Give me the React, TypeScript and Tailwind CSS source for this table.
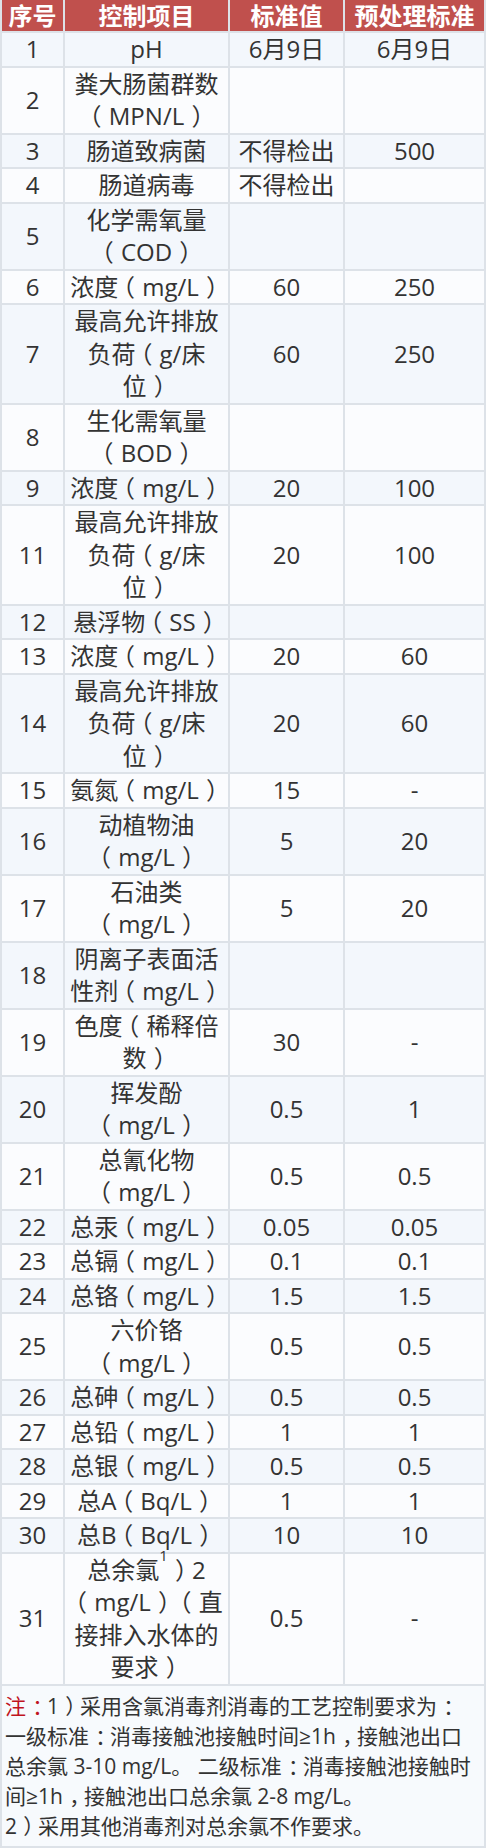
import React from "react";

type Row = { no: string; item: string; std?: string; pre?: string };

// "|" = line break, "^1" = superscript 1
const rows: Row[] = [
  { no: "1", item: "pH", std: "6月9日", pre: "6月9日" },
  { no: "2", item: "粪大肠菌群数|（MPN/L）" },
  { no: "3", item: "肠道致病菌", std: "不得检出", pre: "500" },
  { no: "4", item: "肠道病毒", std: "不得检出" },
  { no: "5", item: "化学需氧量|（COD）" },
  { no: "6", item: "浓度（mg/L）", std: "60", pre: "250" },
  { no: "7", item: "最高允许排放|负荷（g/床|位）", std: "60", pre: "250" },
  { no: "8", item: "生化需氧量|（BOD）" },
  { no: "9", item: "浓度（mg/L）", std: "20", pre: "100" },
  { no: "11", item: "最高允许排放|负荷（g/床|位）", std: "20", pre: "100" },
  { no: "12", item: "悬浮物（SS）" },
  { no: "13", item: "浓度（mg/L）", std: "20", pre: "60" },
  { no: "14", item: "最高允许排放|负荷（g/床|位）", std: "20", pre: "60" },
  { no: "15", item: "氨氮（mg/L）", std: "15", pre: "-" },
  { no: "16", item: "动植物油|（mg/L）", std: "5", pre: "20" },
  { no: "17", item: "石油类|（mg/L）", std: "5", pre: "20" },
  { no: "18", item: "阴离子表面活|性剂（mg/L）" },
  { no: "19", item: "色度（稀释倍|数）", std: "30", pre: "-" },
  { no: "20", item: "挥发酚|（mg/L）", std: "0.5", pre: "1" },
  { no: "21", item: "总氰化物|（mg/L）", std: "0.5", pre: "0.5" },
  { no: "22", item: "总汞（mg/L）", std: "0.05", pre: "0.05" },
  { no: "23", item: "总镉（mg/L）", std: "0.1", pre: "0.1" },
  { no: "24", item: "总铬（mg/L）", std: "1.5", pre: "1.5" },
  { no: "25", item: "六价铬|（mg/L）", std: "0.5", pre: "0.5" },
  { no: "26", item: "总砷（mg/L）", std: "0.5", pre: "0.5" },
  { no: "27", item: "总铅（mg/L）", std: "1", pre: "1" },
  { no: "28", item: "总银（mg/L）", std: "0.5", pre: "0.5" },
  { no: "29", item: "总A（Bq/L）", std: "1", pre: "1" },
  { no: "30", item: "总B（Bq/L）", std: "10", pre: "10" },
  { no: "31", item: "总余氯^1）2|（mg/L）（直|接排入水体的|要求）", std: "0.5", pre: "-" },
];

// the reference font centres full-width punctuation in its box; shift ours inside a 1em slot
const punct: Record<string, string> = {
  "（": "inline-block w-[1em] text-left indent-[-0.3em]",
  "）": "inline-block w-[1em] text-left indent-[0.3em]",
  "：": "inline-block w-[1em] text-left indent-[0.3em]",
  "，": "inline-block w-[1em] text-left indent-[0.3em]",
};

function Txt({ s }: { s: string }) {
  const lines = s.split("|");
  return (
    <>
      {lines.map((line, li) => (
        <React.Fragment key={li}>
          {li > 0 && <br />}
          {line.split(/([（）：，]|\^1)/).map((p, i) => {
            if (p === "^1")
              return (
                <sup key={i} className="text-[15px] leading-[0] align-[10px]">
                  1
                </sup>
              );
            if (punct[p])
              return (
                <span key={i} className={punct[p]}>
                  {p}
                </span>
              );
            return p;
          })}
        </React.Fragment>
      ))}
    </>
  );
}

const cell = "border-2 border-[#dde2e8] text-center whitespace-nowrap px-0";

export default function App() {
  return (
    <div
      lang="zh-CN"
      className="bg-white font-['Open_Sans','Noto_Sans_CJK_SC',sans-serif] text-[#333333]"
    >
      <table className="w-[484px] table-fixed border-collapse">
        <colgroup>
          <col className="w-[63px]" />
          <col className="w-[165px]" />
          <col className="w-[115px]" />
          <col className="w-[141px]" />
        </colgroup>
        <thead>
          <tr className="bg-[#c0504d] text-white text-[24px] font-bold leading-[31px]">
            <th className="border-2 border-[#dde2e8] border-t-0 px-0 whitespace-nowrap">序号</th>
            <th className="border-2 border-[#dde2e8] border-t-0 px-0 whitespace-nowrap">控制项目</th>
            <th className="border-2 border-[#dde2e8] border-t-0 px-0 whitespace-nowrap">标准值</th>
            <th className="border-2 border-[#dde2e8] border-t-0 px-0 whitespace-nowrap">预处理标准</th>
          </tr>
        </thead>
        <tbody className="text-[24px] leading-[32.5px]">
          {rows.map((r, i) => (
            <tr key={r.no} className={i % 2 === 0 ? "bg-[#f3f7fc]" : "bg-[#fbfcfe]"}>
              <td className={cell}>{r.no}</td>
              <td className={cell}>
                <Txt s={r.item} />
              </td>
              <td className={cell}>{r.std ?? ""}</td>
              <td className={cell}>{r.pre ?? ""}</td>
            </tr>
          ))}
          <tr className="bg-[#f7fafd]">
            <td
              colSpan={4}
              className="border-2 border-[#dde2e8] px-[3px] py-[5px] text-left text-[21px] leading-[30px] whitespace-nowrap"
            >
              <span className="text-[#c0141e]">
                注<Txt s="：" />
              </span>
              <Txt s="1）采用含氯消毒剂消毒的工艺控制要求为：|一级标准：消毒接触池接触时间≥1h，接触池出口|总余氯 3-10 mg/L。 二级标准：消毒接触池接触时|间≥1h，接触池出口总余氯 2-8 mg/L。|2）采用其他消毒剂对总余氯不作要求。" />
            </td>
          </tr>
        </tbody>
      </table>
    </div>
  );
}
